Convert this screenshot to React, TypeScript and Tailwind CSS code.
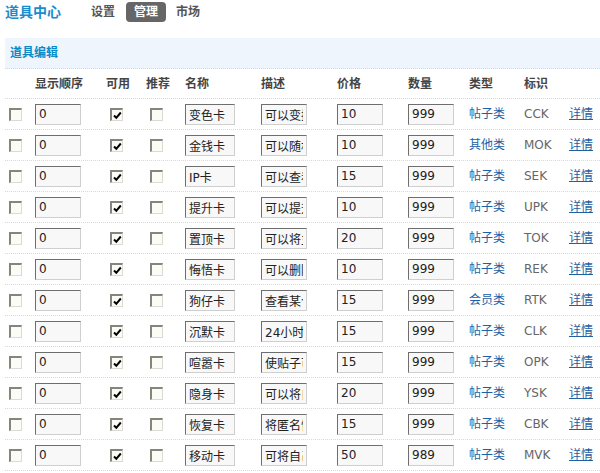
const FONT = "font-['DejaVu_Sans','Noto_Sans_CJK_SC',sans-serif]"

interface Prop {
  name: string
  desc: string
  price: string
  qty: string
  kind: string
  code: string
}

const PROPS: Prop[] = [
  { name: '变色卡', desc: '可以变换帖子标题颜色', price: '10', qty: '999', kind: '帖子类', code: 'CCK' },
  { name: '金钱卡', desc: '可以随机获得金钱', price: '10', qty: '999', kind: '其他类', code: 'MOK' },
  { name: 'IP卡', desc: '可以查看帖子作者IP', price: '15', qty: '999', kind: '帖子类', code: 'SEK' },
  { name: '提升卡', desc: '可以提升帖子到第一页', price: '10', qty: '999', kind: '帖子类', code: 'UPK' },
  { name: '置顶卡', desc: '可以将主题置顶', price: '20', qty: '999', kind: '帖子类', code: 'TOK' },
  { name: '悔悟卡', desc: '可以删除自己的帖子', price: '10', qty: '999', kind: '帖子类', code: 'REK' },
  { name: '狗仔卡', desc: '查看某个用户的在线状态', price: '15', qty: '999', kind: '会员类', code: 'RTK' },
  { name: '沉默卡', desc: '24小时内不能回复', price: '15', qty: '999', kind: '帖子类', code: 'CLK' },
  { name: '喧嚣卡', desc: '使贴子可以回复', price: '15', qty: '999', kind: '帖子类', code: 'OPK' },
  { name: '隐身卡', desc: '可以将自己隐身', price: '20', qty: '999', kind: '帖子类', code: 'YSK' },
  { name: '恢复卡', desc: '将匿名恢复为正常显示', price: '15', qty: '999', kind: '帖子类', code: 'CBK' },
  { name: '移动卡', desc: '可将自己的帖子移动', price: '50', qty: '989', kind: '帖子类', code: 'MVK' },
]

const GRID = 'grid grid-cols-[26px_71px_40px_39px_76px_76px_71px_61px_55px_45px_35px] items-center'

function Box({ checked }: { checked?: boolean }) {
  return (
    <span className="relative block w-[13px] h-[13px] bg-[#fcfcf6] border-t-2 border-l-2 border-t-[#85857d] border-l-[#85857d] border-b border-r border-b-[#dcdad2] border-r-[#dcdad2]">
      {checked && (
        <svg width="9" height="9" viewBox="0 0 9 9" className="absolute left-[1px] top-[1px]">
          <path d="M1 4.5 L3.3 6.8 L7.8 1.5" stroke="#000" strokeWidth="2" fill="none" />
        </svg>
      )}
    </span>
  )
}

function Field({ value, width }: { value: string; width: string }) {
  return (
    <input
      readOnly
      defaultValue={value}
      className={`${width} h-[21px] px-[3px] text-[12px] text-[#222] bg-[#f8f8f8] border border-t-[#6e6e6e] border-l-[#6e6e6e] border-b-[#cfcfcf] border-r-[#cfcfcf] outline-none ${FONT}`}
    />
  )
}

export default function App() {
  return (
    <div className={`w-[600px] h-[473px] bg-white overflow-hidden text-[12px] ${FONT}`}>
      {/* Top nav */}
      <div className="flex items-center h-[24px] pl-[5px]">
        <span className="text-[14px] font-bold text-[#1a8ccb] leading-none">道具中心</span>
        <span className="ml-[30px] font-bold text-[#555] leading-none">设置</span>
        <span className="ml-[11px] h-[20px] w-[40px] flex items-center justify-center rounded-[4px] bg-[#666] text-white font-bold leading-none">
          管理
        </span>
        <span className="ml-[10px] font-bold text-[#555] leading-none">市场</span>
      </div>

      <div className="mt-[14px] ml-[5px]">
        <div className="h-[31px] flex items-center pl-[5px] bg-[#eef5fc] border-b border-dotted border-[#c4ddef] font-bold text-[#0a8ac7]">
          道具编辑
        </div>

        {/* Column headers */}
        <div className={`${GRID} h-[30px] border-b border-dotted border-[#c4ddef] font-bold text-[#444]`}>
          <span />
          <span className="pl-[4px]">显示顺序</span>
          <span className="pl-[4px]">可用</span>
          <span className="pl-[4px]">推荐</span>
          <span className="pl-[4px]">名称</span>
          <span className="pl-[4px]">描述</span>
          <span className="pl-[4px]">价格</span>
          <span className="pl-[4px]">数量</span>
          <span className="pl-[4px]">类型</span>
          <span className="pl-[4px]">标识</span>
          <span />
        </div>

        {PROPS.map(p => (
          <div key={p.code} className={`${GRID} h-[31px] border-b border-dotted border-[#c4ddef]`}>
            <span className="pl-[4px]"><Box /></span>
            <span className="pl-[4px]"><Field value="0" width="w-[46px]" /></span>
            <span className="pl-[8px]"><Box checked /></span>
            <span className="pl-[8px]"><Box /></span>
            <span className="pl-[4px]"><Field value={p.name} width="w-[50px]" /></span>
            <span className="pl-[4px]"><Field value={p.desc} width="w-[46px]" /></span>
            <span className="pl-[4px]"><Field value={p.price} width="w-[46px]" /></span>
            <span className="pl-[4px]"><Field value={p.qty} width="w-[46px]" /></span>
            <span className="pl-[4px] text-[#1f5fa3]">{p.kind}</span>
            <span className="pl-[4px] text-[#666]">{p.code}</span>
            <a href="#" className="pl-[4px] text-[#1f5fa3] underline">详情</a>
          </div>
        ))}
      </div>
    </div>
  )
}
